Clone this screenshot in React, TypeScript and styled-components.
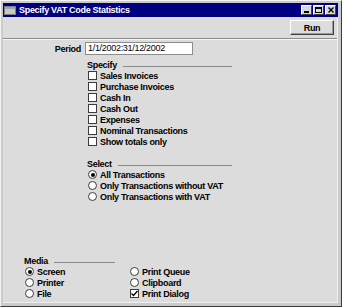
import React from 'react';
import styled, { createGlobalStyle } from 'styled-components';

const GlobalStyle = createGlobalStyle`
  html, body {
    margin: 0;
    padding: 0;
    background: #dcdcdc;
  }
  body {
    font-family: "Liberation Sans", Arial, sans-serif;
  }
`;

const Window = styled.div`
  width: 342px;
  height: 307px;
  box-sizing: border-box;
  display: flex;
  flex-direction: column;
  background: #cbcbcb;
  border: 1px solid;
  border-color: #f4f4f4 #3a3a3a #3a3a3a #f4f4f4;
  padding: 2px 3px 3px 2px;
  font: bold 9px "Liberation Sans", Arial, sans-serif;
  letter-spacing: -0.3px;
  color: #000;
`;

const TitleBar = styled.div`
  height: 14px;
  flex: none;
  display: flex;
  align-items: center;
  gap: 3px;
  padding: 0 2px 0 1px;
  background: #000080;
  color: #fff;
`;

const Title = styled.span`
  font-size: 9px;
  font-weight: bold;
  white-space: nowrap;
`;

const Controls = styled.div`
  margin-left: auto;
  display: flex;
  gap: 1px;
`;

const ControlButton = styled.div`
  width: 11px;
  height: 10px;
  box-sizing: border-box;
  background: #d8d8d8;
  border: 1px solid;
  border-color: #fff #404040 #404040 #fff;
  display: flex;
  align-items: center;
  justify-content: center;
`;

const Body = styled.div`
  flex: 1;
  display: flex;
  flex-direction: column;
  background: #dcdcdc;
  border-right: 1px solid #efefef;
  border-bottom: 1px solid #efefef;
`;

const Toolbar = styled.div`
  height: 21px;
  flex: none;
  display: flex;
  justify-content: flex-end;
  align-items: flex-start;
  padding: 3px 3px 0 0;
  box-sizing: border-box;
`;

const PushButton = styled.div`
  width: 44px;
  height: 15px;
  box-sizing: border-box;
  display: flex;
  align-items: center;
  justify-content: center;
  background: #dcdcdc;
  border: 1px solid;
  border-color: #fff #404040 #404040 #fff;
  box-shadow: inset -1px -1px 0 #9a9a9a;
`;

const Separator = styled.div`
  flex: none;
  border-top: 1px solid #8a8a8a;
  border-bottom: 1px solid #f6f6f6;
`;

const Form = styled.div`
  flex: 1;
  display: flex;
  flex-direction: column;
  padding: 2px 0 3px;
`;

const FieldRow = styled.div`
  display: flex;
  align-items: center;
  gap: 4px;
  height: 13px;
`;

const FieldLabel = styled.span`
  width: 78px;
  text-align: right;
`;

const TextInput = styled.div`
  width: 108px;
  height: 13px;
  box-sizing: border-box;
  background: #fff;
  border: 1px solid #8c8c8c;
  font-weight: normal;
  padding-left: 2px;
  line-height: 11px;
`;

const Group = styled.div<{ $left: number; $width: number; $top?: number; $bottom?: boolean }>`
  margin-left: ${p => p.$left}px;
  width: ${p => p.$width}px;
  margin-top: ${p => (p.$bottom ? 'auto' : `${p.$top ?? 0}px`)};
`;

const GroupHeader = styled.div<{ $width?: number }>`
  display: flex;
  align-items: center;
  height: 11px;
  width: ${p => (p.$width ? `${p.$width}px` : 'auto')};
`;

const HeaderLine = styled.div`
  flex: 1;
  margin: 3px 0 0 6px;
  border-top: 1px solid #8a8a8a;
`;

const OptionRow = styled.div`
  display: flex;
  align-items: center;
  gap: 3px;
  height: 11px;
  padding-left: 1px;
  white-space: nowrap;
`;

const CheckBox = styled.span`
  width: 9px;
  height: 9px;
  box-sizing: border-box;
  background: #fff;
  border: 1px solid #3c3c3c;
  display: flex;
  align-items: center;
  justify-content: center;
`;

const Radio = styled.span<{ $checked?: boolean }>`
  width: 9px;
  height: 9px;
  box-sizing: border-box;
  background: #fff;
  border: 1px solid #3c3c3c;
  border-radius: 50%;
  display: flex;
  align-items: center;
  justify-content: center;

  &::after {
    content: '';
    display: ${p => (p.$checked ? 'block' : 'none')};
    width: 4px;
    height: 4px;
    border-radius: 50%;
    background: #000;
  }
`;

const MediaGrid = styled.div`
  display: grid;
  grid-template-columns: 105px auto;
  grid-auto-flow: column;
  grid-template-rows: repeat(3, 11px);
`;

const Check = ({ checked, label }: { checked?: boolean; label: string }) => (
  <OptionRow>
    <CheckBox>
      {checked && (
        <svg width="7" height="7" viewBox="0 0 7 7">
          <path d="M0.5 3.5 L2.5 5.5 L6.5 1" stroke="#000" strokeWidth="1.4" fill="none" />
        </svg>
      )}
    </CheckBox>
    {label}
  </OptionRow>
);

const RadioOption = ({ checked, label }: { checked?: boolean; label: string }) => (
  <OptionRow>
    <Radio $checked={checked} />
    {label}
  </OptionRow>
);

const AppIcon = () => (
  <svg width="12" height="9" viewBox="0 0 12 9">
    <rect x="0.5" y="0.5" width="11" height="8" fill="#c8c8c8" stroke="#808080" />
    <rect x="1" y="1" width="10" height="2" fill="#9ea7b8" />
  </svg>
);

export default function App() {
  return (
    <>
      <GlobalStyle />
      <Window>
        <TitleBar>
          <AppIcon />
          <Title>Specify VAT Code Statistics</Title>
          <Controls>
            <ControlButton>
              <svg width="6" height="6" viewBox="0 0 6 6">
                <rect x="0" y="4" width="5" height="2" fill="#000" />
              </svg>
            </ControlButton>
            <ControlButton>
              <svg width="7" height="6" viewBox="0 0 7 6">
                <rect x="0.5" y="0.5" width="6" height="5" fill="none" stroke="#000" />
                <rect x="0" y="0" width="7" height="2" fill="#000" />
              </svg>
            </ControlButton>
            <ControlButton>
              <svg width="6" height="6" viewBox="0 0 6 6">
                <path d="M0.5 0.5 L5.5 5.5 M5.5 0.5 L0.5 5.5" stroke="#000" strokeWidth="1.4" />
              </svg>
            </ControlButton>
          </Controls>
        </TitleBar>
        <Body>
          <Toolbar>
            <PushButton>Run</PushButton>
          </Toolbar>
          <Separator />
          <Form>
            <FieldRow>
              <FieldLabel>Period</FieldLabel>
              <TextInput>1/1/2002:31/12/2002</TextInput>
            </FieldRow>

            <Group $left={84} $width={145} $top={4}>
              <GroupHeader>
                Specify
                <HeaderLine />
              </GroupHeader>
              <Check label="Sales Invoices" />
              <Check label="Purchase Invoices" />
              <Check label="Cash In" />
              <Check label="Cash Out" />
              <Check label="Expenses" />
              <Check label="Nominal Transactions" />
              <Check label="Show totals only" />
            </Group>

            <Group $left={84} $width={145} $top={11}>
              <GroupHeader>
                Select
                <HeaderLine />
              </GroupHeader>
              <RadioOption checked label="All Transactions" />
              <RadioOption label="Only Transactions without VAT" />
              <RadioOption label="Only Transactions with VAT" />
            </Group>

            <Group $left={21} $width={220} $bottom>
              <GroupHeader $width={91}>
                Media
                <HeaderLine />
              </GroupHeader>
              <MediaGrid>
                <RadioOption checked label="Screen" />
                <RadioOption label="Printer" />
                <RadioOption label="File" />
                <RadioOption label="Print Queue" />
                <RadioOption label="Clipboard" />
                <Check checked label="Print Dialog" />
              </MediaGrid>
            </Group>
          </Form>
        </Body>
      </Window>
    </>
  );
}
